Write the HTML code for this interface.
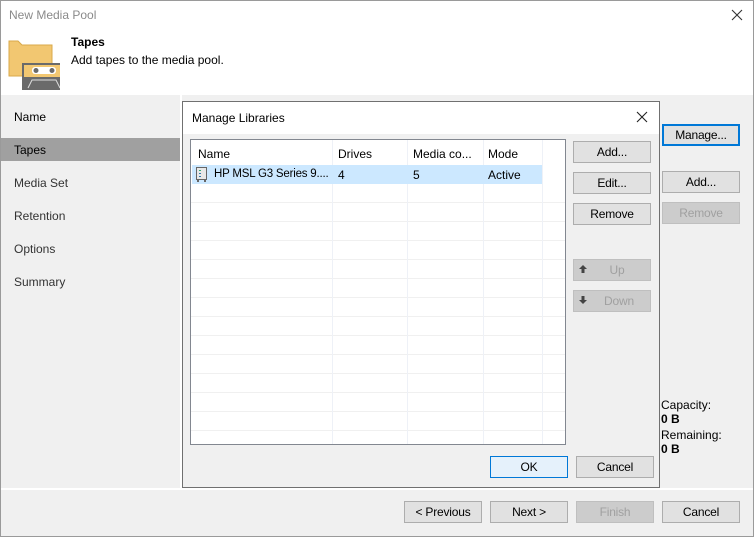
<!DOCTYPE html>
<html><head><meta charset="utf-8"><style>
*{margin:0;padding:0;box-sizing:border-box}
body{width:754px;height:537px;overflow:hidden;font-family:"Liberation Sans",sans-serif;font-size:12px;color:#000;background:#fff;position:relative}
.a{position:absolute}
.win{left:0;top:0;width:754px;height:537px;border:1px solid #9a9a9a;background:#f0f0f0}
.btn{position:absolute;width:78px;height:22px;border:1px solid #adadad;background:#e1e1e1;text-align:center;line-height:20px;font-size:12px;letter-spacing:-0.2px}
.dis{color:#a0a0a0;background:#cccccc;border-color:#bfbfbf}
.nav{position:absolute;left:14px;font-size:12px;color:#333}
</style></head><body>
<div class="a win"></div>
<div class="a" style="left:1px;top:1px;width:752px;height:94px;background:#fff"></div>
<div class="a" style="left:9px;top:8px;color:#8a8a8a;font-size:12px">New Media Pool</div>
<svg class="a" style="left:731px;top:9px" width="12" height="12"><path d="M1 1L11 11M11 1L1 11" stroke="#333" stroke-width="1.1"/></svg>
<svg class="a" style="left:8px;top:40px" width="52" height="50">
<path d="M1 1H10L14 5H44V36H1Z" fill="#f2c771" stroke="#d9a94a"/>
<rect x="14" y="23" width="45" height="28" fill="#6a6a6a"/>
<rect x="16" y="25" width="41" height="12" fill="#f2c771"/>
<rect x="24" y="27" width="24" height="7" rx="3" fill="#fff"/>
<circle cx="28" cy="30.5" r="2.5" fill="#6a6a6a"/><circle cx="44" cy="30.5" r="2.5" fill="#6a6a6a"/>
<path d="M20 48L24 40H48L52 48" stroke="#ddd" fill="none"/>
</svg>
<div class="a" style="left:71px;top:35px;font-weight:bold">Tapes</div>
<div class="a" style="left:71px;top:53px">Add tapes to the media pool.</div>
<div class="a" style="left:1px;top:95px;width:179px;height:393px;background:#f0f0f0"></div>
<div class="a" style="left:180px;top:95px;width:2px;height:393px;background:#fff"></div>
<div class="a" style="left:1px;top:138px;width:179px;height:23px;background:#a0a0a0"></div>
<div class="nav" style="top:110px;color:#000">Name</div>
<div class="nav" style="top:143px;color:#000">Tapes</div>
<div class="nav" style="top:176px">Media Set</div>
<div class="nav" style="top:209px">Retention</div>
<div class="nav" style="top:242px">Options</div>
<div class="nav" style="top:275px">Summary</div>
<div class="a" style="left:1px;top:488px;width:752px;height:2px;background:#fff"></div>

<div class="a" style="left:182px;top:101px;width:478px;height:387px;border:1px solid #707070;background:#f0f0f0"></div>
<div class="a" style="left:183px;top:102px;width:476px;height:32px;background:#fff"></div>
<div class="a" style="left:192px;top:111px">Manage Libraries</div>
<svg class="a" style="left:636px;top:111px" width="12" height="12"><path d="M1 1L11 11M11 1L1 11" stroke="#222" stroke-width="1.1"/></svg>
<div class="a" style="left:190px;top:139px;width:376px;height:306px;border:1px solid #828790;background:#fff;overflow:hidden">
 <div class="a" style="left:0;top:44px;width:374px;height:262px;background:repeating-linear-gradient(to bottom,transparent 0,transparent 18px,#f0f0f0 18px,#f0f0f0 19px)"></div>
 <div class="a" style="left:141px;top:0;width:1px;height:304px;background:#eef1f7"></div>
 <div class="a" style="left:216px;top:0;width:1px;height:304px;background:#eef1f7"></div>
 <div class="a" style="left:292px;top:0;width:1px;height:304px;background:#eef1f7"></div>
 <div class="a" style="left:351px;top:0;width:1px;height:304px;background:#eef1f7"></div>
 <div class="a" style="left:1px;top:25px;width:350px;height:19px;background:#cce8ff"></div>
 <div class="a" style="left:7px;top:7px">Name</div>
 <div class="a" style="left:147px;top:7px">Drives</div>
 <div class="a" style="left:222px;top:7px">Media co...</div>
 <div class="a" style="left:297px;top:7px">Mode</div>
 <svg class="a" style="left:5px;top:27px" width="12" height="15"><rect x="0.5" y="0.5" width="10" height="12" fill="#e8e8e8" stroke="#666"/><rect x="3" y="3" width="2" height="1" fill="#3a7"/><rect x="3" y="6" width="2" height="1" fill="#37a"/><rect x="3" y="9" width="2" height="1" fill="#37a"/><rect x="1" y="13" width="2" height="2" fill="#666"/><rect x="8" y="13" width="2" height="2" fill="#666"/></svg>
 <div class="a" style="left:23px;top:28px;width:116px;overflow:hidden;white-space:nowrap;font-size:11.5px;letter-spacing:-0.2px">HP MSL G3 Series 9....</div>
 <div class="a" style="left:147px;top:28px">4</div>
 <div class="a" style="left:222px;top:28px">5</div>
 <div class="a" style="left:297px;top:28px">Active</div>
</div>
<div class="btn" style="left:573px;top:141px">Add...</div>
<div class="btn" style="left:573px;top:172px">Edit...</div>
<div class="btn" style="left:573px;top:203px">Remove</div>
<div class="btn dis" style="left:573px;top:259px;padding-left:10px">Up</div>
<svg class="a" style="left:578px;top:264px" width="10" height="10"><path d="M5 1L9 5H6.5V9H3.5V5H1Z" fill="#444"/></svg>
<div class="btn dis" style="left:573px;top:290px;padding-left:14px">Down</div>
<svg class="a" style="left:578px;top:295px" width="10" height="10"><path d="M5 9L9 5H6.5V1H3.5V5H1Z" fill="#444"/></svg>
<div class="btn" style="left:490px;top:456px;background:#e5f1fb;border-color:#0078d7">OK</div>
<div class="btn" style="left:576px;top:456px">Cancel</div>

<div class="btn" style="left:662px;top:124px;border:2px solid #0078d7;line-height:18px">Manage...</div>
<div class="btn" style="left:662px;top:171px">Add...</div>
<div class="btn dis" style="left:662px;top:202px">Remove</div>
<div class="a" style="left:661px;top:398px">Capacity:</div>
<div class="a" style="left:661px;top:412px;font-weight:bold">0 B</div>
<div class="a" style="left:661px;top:428px">Remaining:</div>
<div class="a" style="left:661px;top:442px;font-weight:bold">0 B</div>

<div class="btn" style="left:404px;top:501px">&lt; Previous</div>
<div class="btn" style="left:490px;top:501px">Next &gt;</div>
<div class="btn dis" style="left:576px;top:501px">Finish</div>
<div class="btn" style="left:662px;top:501px">Cancel</div>
</body></html>
